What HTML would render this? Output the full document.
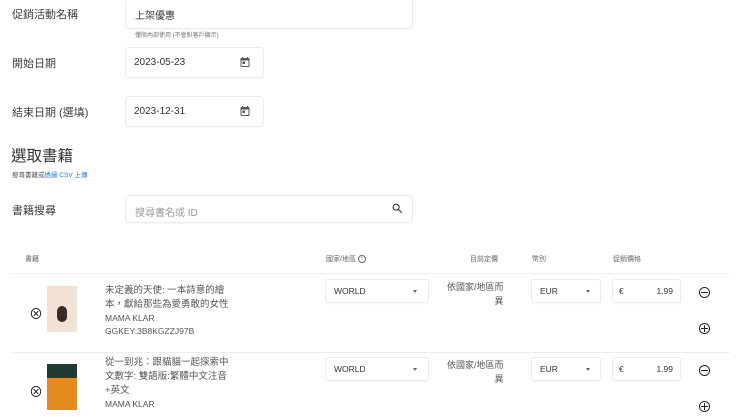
<!DOCTYPE html><html><head><meta charset="utf-8"><style>
*{margin:0;padding:0;box-sizing:border-box}
body{width:740px;height:409px;overflow:hidden;background:#fff;font-family:"Liberation Sans","Noto Sans CJK TC",sans-serif;color:#3c4043;position:relative}
.a{position:absolute;white-space:nowrap}
.lbl{font-size:11px;color:#3c4043}
.in{position:absolute;background:#fff;border-radius:3px;box-shadow:0 0 0 1px #ececec,0 1px 2px rgba(0,0,0,.08)}
.t{position:absolute;font-size:10px;color:#333}
.h{font-size:7px;color:#666}
.sel{position:absolute;height:22px;background:#fff;border-radius:2px;box-shadow:0 0 0 1px #ececec,0 1px 2px rgba(0,0,0,.1);font-size:8.5px;color:#333}
.sel span{position:absolute;top:6px}
.arr{position:absolute;top:10px;width:0;height:0;border-left:2.5px solid transparent;border-right:2.5px solid transparent;border-top:3px solid #666}
.bt{font-size:9.5px;color:#555;line-height:14px}
.sm{font-size:8.5px;line-height:12.5px;display:block}
</style></head><body>
<div class="a lbl" style="left:12px;top:6px">促銷活動名稱</div>
<div class="in" style="left:126px;top:-2px;width:286px;height:30px"><span class="t" style="left:9px;top:9px">上架優惠</span></div>
<div class="a" style="left:135px;top:30px;font-size:6px;color:#777">僅限內部使用 (不會對客戶顯示)</div>

<div class="a lbl" style="left:12px;top:55px">開始日期</div>
<div class="in" style="left:126px;top:48px;width:137px;height:29px"><span class="t" style="left:8px;top:9px">2023-05-23</span>
<svg style="position:absolute;left:113px;top:8px" width="12" height="12" viewBox="0 0 24 24"><path fill="#555" d="M19 4h-1V2h-2v2H8V2H6v2H5c-1.1 0-2 .9-2 2v14c0 1.1.9 2 2 2h14c1.1 0 2-.9 2-2V6c0-1.1-.9-2-2-2zm0 16H5V9h14v11zM7 11h5v5H7z"/></svg></div>

<div class="a lbl" style="left:12px;top:104px">結束日期 (選填)</div>
<div class="in" style="left:126px;top:97px;width:137px;height:29px"><span class="t" style="left:8px;top:9px">2023-12-31</span>
<svg style="position:absolute;left:113px;top:8px" width="12" height="12" viewBox="0 0 24 24"><path fill="#555" d="M19 4h-1V2h-2v2H8V2H6v2H5c-1.1 0-2 .9-2 2v14c0 1.1.9 2 2 2h14c1.1 0 2-.9 2-2V6c0-1.1-.9-2-2-2zm0 16H5V9h14v11zM7 11h5v5H7z"/></svg></div>

<div class="a" style="left:11px;top:144px;font-size:15.5px;color:#333">選取書籍</div>
<div class="a" style="left:12px;top:169px;font-size:6.5px;color:#555">搜尋書籍或<span style="color:#1a73e8">透過 CSV 上傳</span></div>

<div class="a lbl" style="left:12px;top:202px">書籍搜尋</div>
<div class="in" style="left:126px;top:196px;width:286px;height:26px"><span class="t" style="left:9px;top:8px;color:#999">搜尋書名或 ID</span>
<svg style="position:absolute;left:265px;top:6px" width="13" height="13" viewBox="0 0 24 24"><path fill="#333" d="M15.5 14h-.79l-.28-.27A6.47 6.47 0 0016 9.5 6.5 6.5 0 109.5 16c1.61 0 3.09-.59 4.23-1.57l.27.28v.79l5 4.99L20.49 19l-4.99-5zm-6 0C7.010 14 5 11.99 5 9.5S7.01 5 9.5 5 14 7.01 14 9.5 11.99 14 9.5 14z"/></svg></div>

<div class="a h" style="left:25px;top:254px">書籍</div>
<div class="a h" style="left:326px;top:254px">國家/地區 <span style="display:inline-block;width:8px;height:8px;border:1px solid #666;border-radius:50%;font-size:5px;text-align:center;line-height:6px;vertical-align:middle">i</span></div>
<div class="a h" style="left:470px;top:254px">目前定價</div>
<div class="a h" style="left:532px;top:254px">幣別</div>
<div class="a h" style="left:613px;top:254px">促銷價格</div>
<div class="a" style="left:10px;top:273px;width:720px;height:1px;background:#f0f0f0"></div>
<div class="a" style="left:10px;top:352px;width:720px;height:1px;background:#eee"></div>

<!-- row1 -->
<div class="a" style="left:29px;top:304px;font-size:14px;color:#222">⊗</div>
<div class="a" style="left:47px;top:286px;width:30px;height:46px;background:#f3e3d6"><div style="position:absolute;left:10px;top:20px;width:10px;height:16px;border-radius:5px;background:#3a2b25"></div></div>
<div class="a bt" style="left:105px;top:284px">未定義的天使: 一本詩意的繪<br>本，獻給那些為愛勇敢的女性<span class="sm">MAMA KLAR</span><span class="sm">GGKEY:3B8KGZZJ97B</span></div>
<div class="sel" style="left:326px;top:280px;width:102px"><span style="left:8px">WORLD</span><div class="arr" style="left:87px"></div></div>
<div class="a" style="left:447px;top:280px;font-size:9px;color:#555;text-align:right;line-height:14px">依國家/地區而<br>異</div>
<div class="sel" style="left:532px;top:280px;width:68px"><span style="left:8px">EUR</span><div class="arr" style="left:54px"></div></div>
<div class="sel" style="left:613px;top:280px;width:67px"><span style="left:6px">€</span><span style="right:7px">1.99</span></div>
<div class="a" style="left:697px;top:282px;font-size:15px;color:#222">⊖</div>
<div class="a" style="left:697px;top:318px;font-size:15px;color:#222">⊕</div>

<!-- row2 -->
<div class="a" style="left:29px;top:382px;font-size:14px;color:#222">⊗</div>
<div class="a" style="left:47px;top:364px;width:30px;height:46px;background:#e58a1f"><div style="height:14px;background:#1f3b33"></div></div>
<div class="a bt" style="left:105px;top:356px">從一到兆：跟貓貓一起探索中<br>文數字: 雙語版:繁體中文注音<br>+英文<span class="sm">MAMA KLAR</span></div>
<div class="sel" style="left:326px;top:358px;width:102px"><span style="left:8px">WORLD</span><div class="arr" style="left:87px"></div></div>
<div class="a" style="left:447px;top:358px;font-size:9px;color:#555;text-align:right;line-height:14px">依國家/地區而<br>異</div>
<div class="sel" style="left:532px;top:358px;width:68px"><span style="left:8px">EUR</span><div class="arr" style="left:54px"></div></div>
<div class="sel" style="left:613px;top:358px;width:67px"><span style="left:6px">€</span><span style="right:7px">1.99</span></div>
<div class="a" style="left:697px;top:360px;font-size:15px;color:#222">⊖</div>
<div class="a" style="left:697px;top:396px;font-size:15px;color:#222">⊕</div>
</body></html>
